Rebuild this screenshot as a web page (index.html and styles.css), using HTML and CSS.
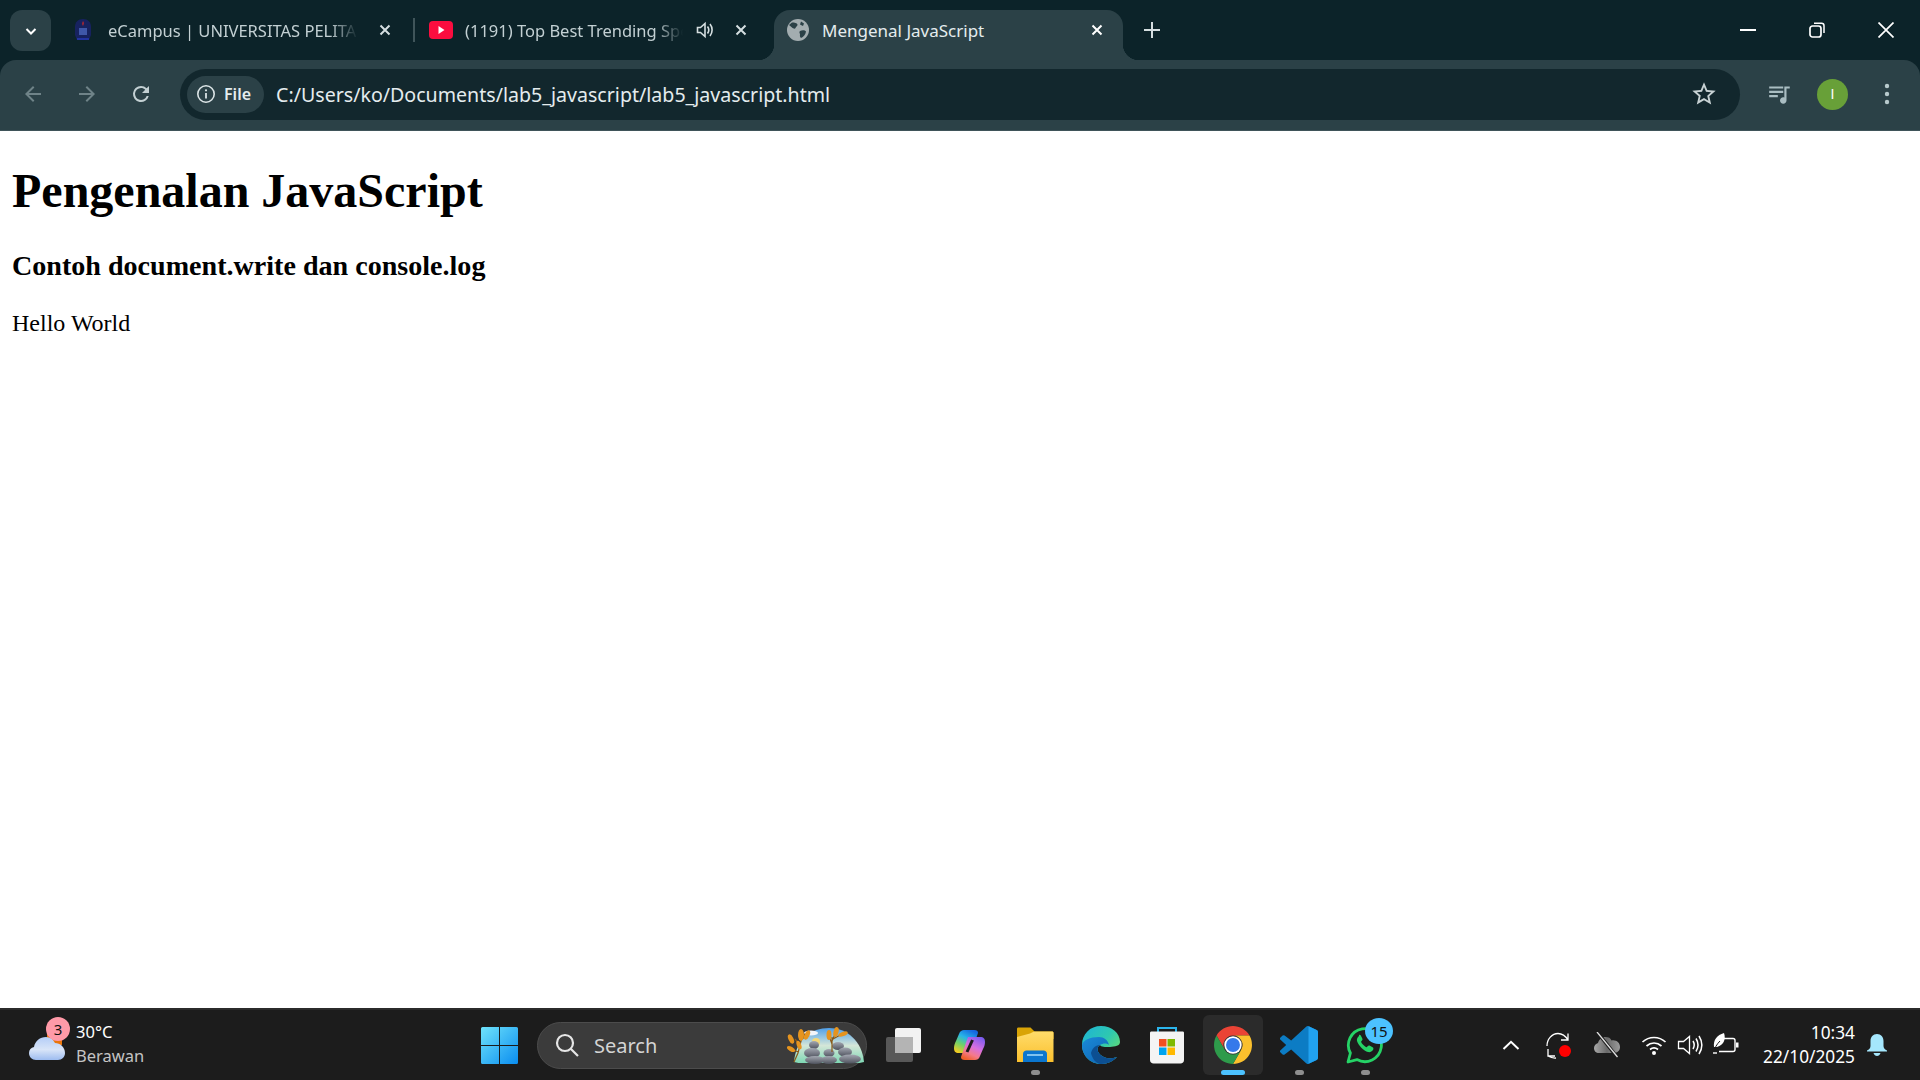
FILE: index.html
```html
<!DOCTYPE html>
<html lang="id">
<head>
    <meta charset="UTF-8">
    <title>Mengenal JavaScript</title>
    <link rel="stylesheet" href="styles.css">
</head>
<body>

<header class="chrome">
    <div class="tabstrip">
        <button class="tab-search">
            <svg width="14" height="14" viewBox="0 0 14 14"><path d="M2.500 5l4.500 4.500L11.500 5" fill="none" stroke="#fff" stroke-width="2"/></svg>
        </button>
        <div class="tab tab-first">
            <svg class="favicon" width="20" height="24" viewBox="0 0 20 24">
                <path d="M10 1c5 0 8 3 8 8v8l-2 5H4l-2-5V9c0-5 3-8 8-8z" fill="#17225f"/>
                <path d="M10 3c1.500 2 .5 3.500 0 5-1-1.500-1-3 0-5z" fill="#c62828"/>
                <rect x="6" y="10" width="8" height="7" fill="#3f57a8"/>
                <rect x="4" y="20" width="12" height="2" fill="#2233a0"/>
            </svg>
            <span class="tab-title">eCampus | UNIVERSITAS PELITA BANGSA</span>
            <svg class="tab-close" width="12" height="12" viewBox="0 0 12 12"><path d="M1.500 1.500l9 9m0-9l-9 9" stroke="#d5dee0" stroke-width="2"/></svg>
        </div>
        <span class="tab-sep"></span>
        <div class="tab tab-second">
            <svg class="favicon" width="24" height="18" viewBox="0 0 24 18">
                <rect width="24" height="18" rx="4" fill="#fb0d3f"/>
                <path d="M9.500 5l6 4-6 4z" fill="#fff"/>
            </svg>
            <span class="tab-title">(1191) Top Best Trending Sped Up Songs</span>
            <svg class="tab-audio" width="20" height="20" viewBox="0 0 20 20">
                <path d="M2.500 7.500v5h3l4.500 4v-13l-4.500 4z" fill="none" stroke="#d5dee0" stroke-width="1.600"/>
                <path d="M12.500 6.500c1.500 2 1.500 5 0 7M15 4c2.800 3.500 2.800 8.500 0 12" fill="none" stroke="#d5dee0" stroke-width="1.600"/>
            </svg>
            <svg class="tab-close" width="12" height="12" viewBox="0 0 12 12"><path d="M1.500 1.500l9 9m0-9l-9 9" stroke="#d5dee0" stroke-width="2"/></svg>
        </div>
        <div class="tab tab-active">
            <svg class="favicon" width="22" height="22" viewBox="0 0 22 22">
                <circle cx="11" cy="11" r="11" fill="#a3adb0"/>
                <path d="M5 3.500c2.500 0 5 .5 5.500 2 .3 1.500-1.500 2-2 3.500-.5 1.200-2.500.5-3.500-.5L2 6zM13 12c2-1 5-1 6 .5-.5 3-2.500 5.500-5 6.500-1.500-1-1-3-1-4-.5-1-1-2 0-3zM14 2.500l3 2-1 2.500-3-1.500z" fill="#2b4147"/>
            </svg>
            <span class="tab-title">Mengenal JavaScript</span>
            <svg class="tab-close" width="12" height="12" viewBox="0 0 12 12"><path d="M1.500 1.500l9 9m0-9l-9 9" stroke="#fff" stroke-width="2"/></svg>
        </div>
        <svg class="tab-new" width="16" height="16" viewBox="0 0 16 16"><path d="M8 0v16M0 8h16" stroke="#d5dee0" stroke-width="2"/></svg>
        <div class="window-controls">
            <svg width="16" height="16" viewBox="0 0 16 16"><path d="M0 8h16" stroke="#fff" stroke-width="2"/></svg>
            <svg width="16" height="16" viewBox="0 0 16 16"><rect x="1" y="4" width="11" height="11" rx="2.500" fill="none" stroke="#fff" stroke-width="1.700"/><path d="M5 1.200h7.500a2.500 2.500 0 0 1 2.500 2.500V11" fill="none" stroke="#fff" stroke-width="1.500"/></svg>
            <svg width="16" height="16" viewBox="0 0 16 16"><path d="M.5.500l15 15m0-15l-15 15" stroke="#fff" stroke-width="1.700"/></svg>
        </div>
    </div>
    <div class="toolbar">
        <svg class="nav-icon" width="24" height="24" viewBox="0 0 24 24"><path d="M20 11H7.830l5.590-5.590L12 4l-8 8 8 8 1.410-1.410L7.830 13H20v-2z" fill="#6f8388"/></svg>
        <svg class="nav-icon" width="24" height="24" viewBox="0 0 24 24"><path d="M12 4l-1.410 1.410L16.170 11H4v2h12.170l-5.580 5.590L12 20l8-8z" fill="#6f8388"/></svg>
        <svg class="nav-icon" width="24" height="24" viewBox="0 0 24 24"><path d="M17.650 6.350A7.960 7.960 0 0 0 12 4a8 8 0 1 0 7.730 10h-2.080A6 6 0 1 1 12 6c1.660 0 3.140.690 4.220 1.780L13 11h7V4l-2.350 2.350z" fill="#c3d0d3"/></svg>
        <div class="omnibox">
            <div class="chip">
                <svg width="20" height="20" viewBox="0 0 20 20"><circle cx="10" cy="10" r="8.200" fill="none" stroke="#dbe4e6" stroke-width="1.600"/><path d="M10 9v5.500" stroke="#dbe4e6" stroke-width="1.800"/><circle cx="10" cy="6.300" r="1.100" fill="#dbe4e6"/></svg>
                <span>File</span>
            </div>
            <span class="url">C:/Users/ko/Documents/lab5_javascript/lab5_javascript.html</span>
            <svg class="star" width="28" height="28" viewBox="0 0 24 24"><path d="M22 9.240l-7.190-.62L12 2 9.190 8.630 2 9.240l5.460 4.730L5.820 21 12 17.270 18.180 21l-1.630-7.030L22 9.240zM12 15.400l-3.760 2.270 1-4.280-3.320-2.880 4.380-.38L12 6.100l1.710 4.040 4.380.38-3.320 2.880 1 4.280L12 15.400z" fill="#c8d2d4"/></svg>
        </div>
        <svg class="media" width="26" height="26" viewBox="0 0 24 24"><path d="M15 5H2v2h13V5zm0 4H2v2h13V9zM2 15h8v-2H2v2zM16 5v10.180c-.31-.11-.65-.18-1-.18-1.660 0-3 1.340-3 3s1.340 3 3 3 3-1.340 3-3V7h3V5h-5z" fill="#a9bdc2"/></svg>
        <div class="avatar">I</div>
        <svg class="kebab" width="6" height="22" viewBox="0 0 6 22"><circle cx="3" cy="3" r="2.200" fill="#b8cacd"/><circle cx="3" cy="11" r="2.200" fill="#b8cacd"/><circle cx="3" cy="19" r="2.200" fill="#b8cacd"/></svg>
    </div>
</header>

<main class="page">
    <h1>Pengenalan JavaScript</h1>
    <h3>Contoh document.write dan console.log</h3>
    <p>Hello World</p>
</main>

<footer class="taskbar">
    <div class="weather">
        <div class="weather-icon">
            <svg width="36" height="30" viewBox="0 0 36 30">
                <defs><linearGradient id="cloud" x1="0" y1="0" x2="0" y2="1"><stop offset="0" stop-color="#b4cdf7"/><stop offset=".55" stop-color="#d9e5f8"/><stop offset="1" stop-color="#9dbcf0"/></linearGradient></defs>
                <rect x="18" y="1" width="15" height="12" fill="#e9760c"/>
                <path d="M7 28C3 28 0 25 0 21c0-3 2-5.500 5-6C6 9 11 5 17 5c4 0 7 2 9 6 5 0 10 4 10 10 0 4-3 7-7 7z" fill="url(#cloud)"/>
            </svg>
            <span class="weather-badge">3</span>
        </div>
        <div class="weather-text">
            <span class="temp">30°C</span>
            <span class="cond">Berawan</span>
        </div>
    </div>
    <svg class="winlogo" width="37" height="37" viewBox="0 0 37 37">
        <defs><linearGradient id="win" x1="0" y1="0" x2="1" y2="1"><stop offset="0" stop-color="#6fe3fb"/><stop offset="1" stop-color="#0a8df0"/></linearGradient></defs>
        <path d="M1.500 0H18v18H0V1.500A1.500 1.500 0 0 1 1.500 0zM19 0h16.500A1.500 1.500 0 0 1 37 1.500V18H19zM0 19h18v18H1.500A1.500 1.500 0 0 1 0 35.500zM19 19h18v16.500a1.500 1.500 0 0 1-1.500 1.500H19z" fill="url(#win)"/>
    </svg>
    <div class="search">
        <svg width="26" height="26" viewBox="0 0 26 26"><circle cx="11" cy="11" r="8" fill="none" stroke="#e6e6e6" stroke-width="2.200"/><path d="M17 17l7 7" stroke="#e6e6e6" stroke-width="2.200"/></svg>
        <span>Search</span>
        <svg class="search-art" width="78" height="42" viewBox="0 0 78 42">
            <defs>
                <linearGradient id="sky" x1="0" y1="0" x2="0" y2="1"><stop offset="0" stop-color="#4f9fe8"/><stop offset=".5" stop-color="#d4e6d8"/><stop offset="1" stop-color="#7fd8b4"/></linearGradient>
                <linearGradient id="rock" x1="0" y1="0" x2="0" y2="1"><stop offset="0" stop-color="#a4a8b2"/><stop offset="1" stop-color="#4f535e"/></linearGradient>
            </defs>
            <path d="M7 38C9 15 24 4 42 4c18 0 33 13 35 34-3 1-6 1-9 1H16c-3 0-6 0-9-1z" fill="url(#sky)"/>
            <ellipse cx="24" cy="9" rx="7" ry="2.500" fill="#f2f5fa"/>
            <circle cx="29" cy="18" r="4" fill="#f3d878"/>
            <g fill="url(#rock)">
                <ellipse cx="27" cy="21" rx="5" ry="4"/><ellipse cx="25" cy="29" rx="8" ry="5"/><ellipse cx="28" cy="36" rx="10" ry="4"/>
                <ellipse cx="42" cy="29" rx="5.500" ry="4"/><ellipse cx="42" cy="36" rx="8" ry="4"/>
                <ellipse cx="51" cy="22" rx="6" ry="4"/><ellipse cx="58" cy="28" rx="7" ry="4.500"/><ellipse cx="63" cy="35" rx="11" ry="4.500"/>
            </g>
            <path d="M7 38l4-9 3-12 3-8M11 28l-6-3M13 21l-5-6M14 16l6-6M45 28V13M45 20l-3-8M45 17l4-9M46 15l9-5" fill="none" stroke="#8a5a18" stroke-width="1.200"/>
            <g fill="#e5941f">
                <ellipse cx="4" cy="15" rx="2.500" ry="5" transform="rotate(-25 4 15)"/><ellipse cx="14" cy="11" rx="3" ry="6"/><ellipse cx="20" cy="11" rx="2.500" ry="5" transform="rotate(25 20 11)"/>
                <ellipse cx="4" cy="25" rx="4.500" ry="2.200" transform="rotate(30 4 25)"/><ellipse cx="12" cy="21" rx="2.200" ry="4.500" transform="rotate(-20 12 21)"/>
                <ellipse cx="42" cy="11" rx="2.500" ry="5"/><ellipse cx="49" cy="8" rx="2.500" ry="5" transform="rotate(15 49 8)"/><ellipse cx="56" cy="10" rx="5" ry="2.200" transform="rotate(-20 56 10)"/>
            </g>
        </svg>
    </div>
    <div class="apps">
        <div class="app">
            <svg width="37" height="36" viewBox="0 0 37 36">
                <rect x="10" y="1" width="26" height="25" rx="2" fill="#f2f2f2"/>
                <rect x="1" y="10" width="27" height="25" rx="2" fill="#5c5c5c" fill-opacity=".93"/>
                <rect x="10" y="10" width="18" height="16" fill="#b4b4b4"/>
            </svg>
        </div>
        <div class="app">
            <svg width="33" height="32" viewBox="0 0 33 32">
                <defs>
                    <linearGradient id="cop1" x1=".7" y1="0" x2=".2" y2="1"><stop offset="0" stop-color="#1467e0"/><stop offset=".35" stop-color="#27b4e8"/><stop offset=".65" stop-color="#6fd06a"/><stop offset="1" stop-color="#f5cc20"/></linearGradient>
                    <linearGradient id="cop2" x1=".8" y1="0" x2=".3" y2="1"><stop offset="0" stop-color="#7a5cf0"/><stop offset=".45" stop-color="#d66fe0"/><stop offset=".75" stop-color="#f47a8a"/><stop offset="1" stop-color="#f0602c"/></linearGradient>
                </defs>
                <path d="M11 1h10c3 0 4 1 4 3l-7 20H6c-4 0-5-2-5-5 0-3 1-5 2-7l3-7c1-3 3-4 5-4z" fill="url(#cop1)"/>
                <path d="M22 31H12c-3 0-4-1-4-3l7-20h12c4 0 5 2 5 5 0 3-1 5-2 7l-3 7c-1 3-3 4-5 4z" fill="url(#cop2)"/>
                <path d="M19.500 11l-5.500 12" stroke="#1c1c1c" stroke-width="3"/>
            </svg>
        </div>
        <div class="app">
            <svg width="38" height="36" viewBox="0 0 38 36">
                <path d="M1 2c0-1 .5-1.500 1.500-1.500h12l4 4H36c1 0 1.500.5 1.500 1.500v6H1z" fill="#d9a406"/>
                <defs><linearGradient id="fold" x1="0" y1="0" x2="0" y2="1"><stop offset="0" stop-color="#ffdc6b"/><stop offset="1" stop-color="#fbc02d"/></linearGradient></defs>
                <path d="M1 10l13-3.500 4-2H36c1 0 1.500.5 1.500 1.500v29H1z" fill="url(#fold)"/>
                <path d="M7 35V27c0-2 1.500-3.500 3.500-3.500h17c2 0 3.500 1.500 3.500 3.500v8z" fill="#0b76cf"/>
                <rect x="11" y="27" width="16" height="2" fill="#7fc3f0"/>
            </svg>
        </div>
        <div class="app">
            <svg width="38" height="38" viewBox="0 0 38 38">
                <defs>
                    <linearGradient id="edge1" x1="0" y1="0" x2="1" y2=".8"><stop offset="0" stop-color="#1db3d8"/><stop offset=".55" stop-color="#2ec8b0"/><stop offset="1" stop-color="#6fe066"/></linearGradient>
                    <linearGradient id="edge2" x1="0" y1="0" x2="1" y2="1"><stop offset="0" stop-color="#1a8ad8"/><stop offset="1" stop-color="#0d5fae"/></linearGradient>
                </defs>
                <path d="M19 0C8 0 0 8 0 19c0 10 8 19 19 19 7 0 12-3 16-7-5 2-11 2-15-1-5-3-6-9-2-11 1 2 5 2 10 2 5-.5 10-1 10-5C38 7 30 0 19 0z" fill="url(#edge1)"/>
                <path d="M0 19c0 10 8 19 19 19 7 0 12-3 16-7-5 2-11 2-15-1-5-3-6-9-2-11 3-2 7-2 9 0-1-5-5-8-10-8C8 11 1 14 0 19z" fill="url(#edge2)"/>
                <path d="M9 27c1 5 5 11 10 11 7 0 12-3 16-7-5 2-11 2-15-1-5-3-6-9-2-11-5 0-8 4-9 8z" fill="#0c4f92"/>
            </svg>
        </div>
        <div class="app">
            <svg width="36" height="38" viewBox="0 0 36 38">
                <path d="M9 6V2h18v4" fill="none" stroke="#2bb5ec" stroke-width="2"/>
                <path d="M1 7c0-1 .5-1.500 1.500-1.500h31c1 0 1.500.5 1.500 1.500v27c0 2-1.500 3.500-3.500 3.500h-27C2.500 37.500 1 36 1 34z" fill="#f4f4f4"/>
                <rect x="10" y="13" width="7.500" height="7.500" fill="#f25022"/><rect x="18.500" y="13" width="7.500" height="7.500" fill="#7fba00"/>
                <rect x="10" y="21.500" width="7.500" height="7.500" fill="#00a4ef"/><rect x="18.500" y="21.500" width="7.500" height="7.500" fill="#ffb900"/>
            </svg>
        </div>
        <div class="app app-active">
            <svg width="38" height="38" viewBox="0 0 48 48">
                <path d="M44.780 12A24 24 0 0 0 3.220 12L13.600 30A12 12 0 0 1 24 12z" fill="#ea4335"/>
                <path d="M44.780 12A24 24 0 0 1 24 48L34.400 30A12 12 0 0 0 24 12z" fill="#fbc02d"/>
                <path d="M24 48A24 24 0 0 1 3.220 12L13.600 30A12 12 0 0 0 34.400 30z" fill="#2e9b4b"/>
                <circle cx="24" cy="24" r="11" fill="#fff"/>
                <circle cx="24" cy="24" r="8.800" fill="#3579ea"/>
            </svg>
        </div>
        <div class="app">
            <svg width="38" height="38" viewBox="0 0 100 100">
                <path d="M70.900 99.300a6.200 6.200 0 0 0 4.980-.19l20.600-9.900a6.250 6.250 0 0 0 3.540-5.630V16.400a6.250 6.250 0 0 0-3.540-5.630L75.880.86a6.200 6.200 0 0 0-7.110 1.210L29.350 38.040 12.180 25a4.170 4.170 0 0 0-5.320.24l-5.500 5a4.170 4.170 0 0 0 0 6.160L16.250 50 1.360 63.600a4.170 4.170 0 0 0 0 6.160l5.500 5a4.170 4.170 0 0 0 5.320.24l17.170-13.040 39.420 35.960a6.200 6.200 0 0 0 2.130 1.380zM75 27.300 45.100 50 75 72.700V27.300z" fill="#0c7cc4"/>
                <path d="M75 .4l21.480 10.370A6.250 6.250 0 0 1 100 16.400v67.180a6.250 6.250 0 0 1-3.520 5.630L75 99.600z" fill="#21a2f0"/>
            </svg>
        </div>
        <div class="app">
            <svg width="38" height="38" viewBox="0 0 38 38">
                <path d="M2 36l2.400-9A16.500 16.500 0 1 1 11 33.600z" fill="none" stroke="#25d366" stroke-width="2.800" stroke-linejoin="round"/>
                <path d="M13 10c-1.500 1-2.500 3-2 5 1 4 7 10 11 11 2 .5 4-.5 5-2 .5-1 .5-2 0-2.500l-3.500-2c-.7-.3-1.200 0-1.700.6l-1 1.200c-2-.6-5-3.500-5.800-5.600l1-1.200c.5-.5.6-1 .4-1.700l-1.600-3.300c-.5-.7-1.200-.8-1.800-.5z" fill="#25d366"/>
            </svg>
            <span class="app-badge">15</span>
        </div>
    </div>
    <div class="tray">
        <svg class="tray-chevron" width="18" height="10" viewBox="0 0 18 10"><path d="M1.500 9L9 1.800 16.500 9" fill="none" stroke="#fff" stroke-width="2"/></svg>
        <div class="tray-sync">
            <svg width="28" height="28" viewBox="0 0 28 28">
                <path d="M3 15C3 8 8 2.500 14 2.500c4 0 7.500 2.500 10 6.500M24 2.500V9h-7" fill="none" stroke="#fff" stroke-width="1.300"/>
                <path d="M4 18v7h7M4 25c2.500 1.500 5 2.300 8 2" fill="none" stroke="#fff" stroke-width="1.300"/>
            </svg>
            <span class="sync-dot"></span>
        </div>
        <svg class="tray-cloud" width="26" height="26" viewBox="0 0 26 26">
            <defs><linearGradient id="drive" x1="0" y1="0" x2="1" y2="0"><stop offset="0" stop-color="#a8a8a8"/><stop offset=".5" stop-color="#6a6a6a"/><stop offset="1" stop-color="#9a9a9a"/></linearGradient></defs>
            <path d="M5 21c-3 0-5-2-5-5 0-2.500 2-4.500 4-5 1-3.500 4-6 7.500-6 3 0 5 1 6 3.500 4.500-1 8.500 2 8.500 6.500 0 3.500-2.500 6-6 6z" fill="url(#drive)"/>
            <path d="M4 1l19 24" stroke="#1c1c1c" stroke-width="3.400"/>
            <path d="M3 0l20.500 25" stroke="#e0e0e0" stroke-width="1.300"/>
        </svg>
        <svg class="tray-wifi" width="26" height="22" viewBox="0 0 26 22">
            <path d="M1.500 8c6.500-6 16.500-6 23 0M5.500 12c4.500-4 10.500-4 15 0M9 15.500c2.500-2 5.500-2 8 0" fill="none" stroke="#fff" stroke-width="1.700"/>
            <circle cx="13" cy="19" r="2" fill="#fff"/>
        </svg>
        <svg class="tray-sound" width="26" height="22" viewBox="0 0 26 22">
            <path d="M1.500 7.500v7h5l6 5v-17l-6 5z" fill="none" stroke="#fff" stroke-width="1.300"/>
            <path d="M16 7c1.500 2.500 1.500 5.500 0 8M19 4.500c2.500 4 2.500 9 0 13M22 2c3.500 5.500 3.500 12.500 0 18" fill="none" stroke="#fff" stroke-width="1.500"/>
        </svg>
        <svg class="tray-battery" width="26" height="24" viewBox="0 0 26 24">
            <path d="M11 5.500h9a2 2 0 0 1 2 2v9a2 2 0 0 1-2 2H6" fill="none" stroke="#fff" stroke-width="1.400"/>
            <rect x="23" y="9.500" width="2.500" height="5" fill="#fff"/>
            <path d="M1 14C0 7 4 2 11 0c2 6 0 12-7 14z" fill="#fff"/>
            <path d="M0 20c1.500-5 4-9 7-12" fill="none" stroke="#1c1c1c" stroke-width="1"/>
            <path d="M0 20h4" stroke="#fff" stroke-width="1.400"/>
        </svg>
        <div class="clock">
            <span>10:34</span>
            <span>22/10/2025</span>
        </div>
        <svg class="tray-bell" width="22" height="24" viewBox="0 0 22 24">
            <path d="M11 1c-4 0-6.500 3-6.500 7v5c0 2-1.500 3.500-3.500 4.500v1h20v-1c-2-1-3.500-2.500-3.500-4.500V8c0-4-2.500-7-6.500-7z" fill="#a5e7fd"/>
            <path d="M7.500 20h7c-.5 2-2 3-3.500 3s-3-1-3.500-3z" fill="#a5e7fd"/>
        </svg>
    </div>
</footer>

</body>
</html>
```

FILE: styles.css
```css
* {
    box-sizing: border-box;
}

html, body {
    height: 100%;
}

body {
    margin: 0;
    display: flex;
    flex-direction: column;
    height: 1080px;
    overflow: hidden;
    background-color: #fff;
    font-family: 'Noto Sans', sans-serif;
}

svg {
    display: block;
    flex: none;
}

/* browser window top */

.chrome {
    flex: none;
    background-color: #0c2329;
}

.tabstrip {
    display: flex;
    align-items: flex-end;
    height: 60px;
    padding-left: 10px;
}

.tab-search {
    align-self: flex-start;
    display: flex;
    align-items: center;
    justify-content: center;
    width: 41px;
    height: 41px;
    margin-top: 10px;
    padding: 0;
    border: none;
    border-radius: 12px;
    background-color: #2b4147;
}

.tab {
    display: flex;
    flex: none;
    align-items: center;
    height: 50px;
    padding-bottom: 10px;
    font-size: 16.500px;
    color: #c3d0d3;
}

.tab-title {
    flex: none;
    overflow: hidden;
    white-space: nowrap;
    -webkit-mask-image: linear-gradient(to left, transparent, #000 28px);
    mask-image: linear-gradient(to left, transparent, #000 28px);
}

.tab-first {
    width: 340px;
    margin-left: 22px;
}

.tab-first .tab-title {
    width: 250px;
    margin-left: 15px;
}

.tab-first .tab-close {
    margin-left: 21px;
}

.tab-sep {
    align-self: flex-start;
    flex: none;
    width: 2px;
    height: 24px;
    margin-top: 18px;
    background-color: #40555a;
}

.tab-second {
    width: 359px;
    padding-left: 14px;
}

.tab-second .tab-title {
    width: 218px;
    margin-left: 12px;
}

.tab-audio {
    margin-left: 12px;
}

.tab-second .tab-close {
    margin-left: 20px;
}

.tab-active {
    position: relative;
    width: 349px;
    border-radius: 16px 16px 0 0;
    padding-left: 13px;
    font-size: 17px;
    color: #e4ecee;
    background-color: #2b4147;
}

.tab-active .tab-title {
    width: 255px;
    margin-left: 13px;
    -webkit-mask-image: none;
    mask-image: none;
}

.tab-active .tab-close {
    margin-left: 14px;
}

.tab-active::before, .tab-active::after {
    content: "";
    position: absolute;
    bottom: 0;
    width: 16px;
    height: 16px;
}

.tab-active::before {
    left: -16px;
    background: radial-gradient(circle at 0 0, transparent 16px, #2b4147 16.500px);
}

.tab-active::after {
    right: -16px;
    background: radial-gradient(circle at 100% 0, transparent 16px, #2b4147 16.500px);
}

.tab-new {
    align-self: flex-start;
    margin: 22px 0 0 21px;
}

.window-controls {
    align-self: flex-start;
    display: flex;
    gap: 53px;
    margin: 22px 26px 0 auto;
}

.toolbar {
    display: flex;
    align-items: center;
    height: 71px;
    padding: 0 0 2px 21px;
    border-bottom: 1px solid #3f5359;
    border-radius: 16px 16px 0 0;
    background-color: #2b4147;
}

.nav-icon {
    margin-right: 30px;
}

.nav-icon:nth-child(3) {
    margin-right: 27px;
}

.omnibox {
    display: flex;
    align-items: center;
    width: 1560px;
    height: 51px;
    padding: 0 22px 0 7px;
    border-radius: 26px;
    background-color: #12272d;
}

.chip {
    display: flex;
    align-items: center;
    gap: 8px;
    width: 77px;
    height: 37px;
    padding-left: 9px;
    border-radius: 19px;
    font-size: 16px;
    font-weight: 600;
    color: #e4ecee;
    background-color: #2b4147;
}

.url {
    margin-left: 12px;
    font-size: 19.600px;
    white-space: nowrap;
    color: #e4ecee;
}

.star {
    margin-left: auto;
}

.media {
    margin-left: 27px;
}

.avatar {
    display: flex;
    align-items: center;
    justify-content: center;
    width: 31px;
    height: 31px;
    margin-left: 24px;
    border-radius: 50%;
    font-family: 'Liberation Sans', sans-serif;
    font-size: 14px;
    color: #fff;
    background-color: #68a038;
}

.kebab {
    margin-left: 36px;
}

/* page content */

.page {
    flex: 1;
    min-height: 0;
    padding: 0 12px;
    font-family: 'Liberation Serif', serif;
    color: #000;
    background-color: #fff;
}

.page h1 {
    margin: 32px 0;
    font-size: 48px;
}

.page h3 {
    margin: 28px 0;
    font-size: 28.080px;
}

.page p {
    margin: 24px 0;
    font-size: 24px;
}

/* windows taskbar */

.taskbar {
    flex: none;
    display: flex;
    align-items: center;
    height: 72px;
    border-top: 2px solid #2b2b2b;
    color: #fff;
    background-color: #1c1c1c;
}

.weather {
    display: flex;
    align-items: center;
    width: 481px;
    padding-left: 29px;
}

.weather-icon {
    position: relative;
    margin-top: 4px;
}

.weather-badge {
    position: absolute;
    top: -15px;
    left: 17px;
    width: 24px;
    height: 24px;
    border-radius: 50%;
    font-size: 15px;
    line-height: 24px;
    text-align: center;
    color: #111;
    background-color: #ff9aa8;
}

.weather-text {
    display: flex;
    flex-direction: column;
    margin-top: -2px;
    margin-left: 11px;
    font-size: 16.500px;
    line-height: 24px;
}

.cond {
    color: #c4c4c4;
}

.search {
    display: flex;
    align-items: center;
    width: 330px;
    height: 47px;
    margin-left: 19px;
    padding-left: 16px;
    border: 1px solid #4c4c4c;
    border-radius: 24px;
    font-size: 20px;
    color: #d4d4d4;
    background-color: #3b3b3b;
}

.search span {
    margin-left: 14px;
}

.search-art {
    margin-left: auto;
    margin-right: 1px;
}

.apps {
    display: flex;
    align-items: center;
    margin-left: 3px;
}

.app {
    position: relative;
    display: flex;
    align-items: center;
    justify-content: center;
    width: 66px;
    height: 60px;
}

.app:nth-child(3)::after, .app:nth-child(7)::after, .app:nth-child(8)::after {
    content: "";
    position: absolute;
    bottom: 0;
    left: 29px;
    width: 9px;
    height: 5px;
    border-radius: 3px;
    background-color: #8f8f8f;
}

.app-active::before {
    content: "";
    position: absolute;
    inset: 0 3px;
    border-radius: 6px;
    background-color: #2b2b2b;
}

.app-active::after {
    content: "";
    position: absolute;
    bottom: 0;
    left: 21px;
    width: 24px;
    height: 5px;
    border-radius: 3px;
    background-color: #4cc2ff;
}

.app-active svg {
    position: relative;
}

.app-badge {
    position: absolute;
    top: 3px;
    left: 33px;
    width: 28px;
    height: 26px;
    border-radius: 50%;
    font-size: 15px;
    line-height: 26px;
    text-align: center;
    color: #111;
    background-color: #4cc2ff;
}

.tray {
    display: flex;
    align-items: center;
    margin-left: auto;
    padding-right: 32px;
}

.tray-sync {
    position: relative;
    margin-left: 24px;
}

.sync-dot {
    position: absolute;
    top: 14px;
    left: 14.500px;
    width: 12px;
    height: 12px;
    border-radius: 50%;
    background-color: #f00;
}

.tray-cloud {
    margin-left: 22px;
}

.tray-wifi {
    margin-left: 21px;
}

.tray-sound {
    margin-left: 10px;
}

.tray-battery {
    margin-left: 10px;
}

.clock {
    display: flex;
    flex-direction: column;
    align-items: flex-end;
    margin-left: 24px;
    font-size: 17.300px;
    line-height: 24px;
}

.tray-bell {
    margin-left: 11px;
}
```
